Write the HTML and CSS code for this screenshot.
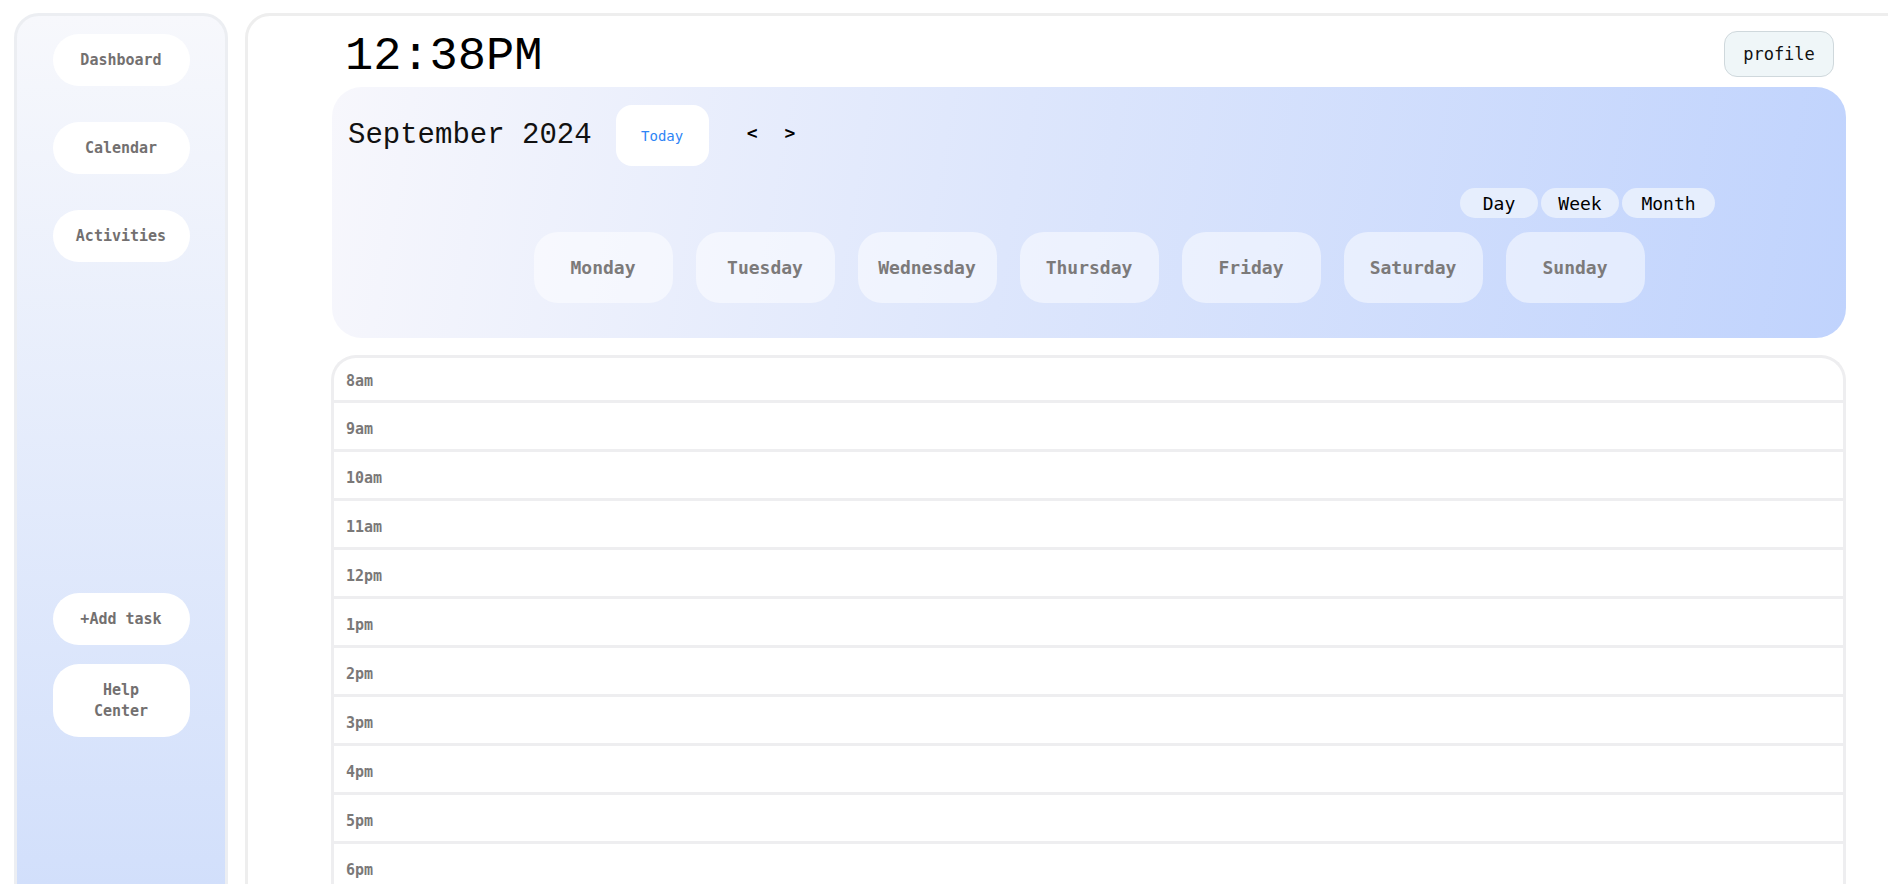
FILE: index.html
```html
<!DOCTYPE html>
<html lang="en">
<head>
<meta charset="utf-8">
<title>Calendar</title>
<link rel="stylesheet" href="styles.css">
</head>
<body>
<div class="app">
  <aside class="sidebar">
    <nav class="nav">
      <button class="side-btn">Dashboard</button>
      <button class="side-btn">Calendar</button>
      <button class="side-btn">Activities</button>
    </nav>
    <div class="side-bottom">
      <button class="side-btn">+Add task</button>
      <button class="side-btn help">Help<br>Center</button>
    </div>
  </aside>
  <main class="main">
    <div class="content">
      <div class="topbar">
        <div class="clock">12:38PM</div>
        <button class="profile">profile</button>
      </div>
      <section class="cal-header">
        <div class="month-row">
          <h1 class="month">September 2024</h1>
          <button class="today">Today</button>
          <div class="arrows">
            <button class="arrow">&lt;</button>
            <button class="arrow">&gt;</button>
          </div>
        </div>
        <div class="views">
          <button class="view">Day</button>
          <button class="view">Week</button>
          <button class="view">Month</button>
        </div>
        <div class="days">
          <div class="day">Monday</div>
          <div class="day">Tuesday</div>
          <div class="day">Wednesday</div>
          <div class="day">Thursday</div>
          <div class="day">Friday</div>
          <div class="day">Saturday</div>
          <div class="day">Sunday</div>
        </div>
      </section>
      <section class="grid">
        <div class="slot">8am</div>
        <div class="slot">9am</div>
        <div class="slot">10am</div>
        <div class="slot">11am</div>
        <div class="slot">12pm</div>
        <div class="slot">1pm</div>
        <div class="slot">2pm</div>
        <div class="slot">3pm</div>
        <div class="slot">4pm</div>
        <div class="slot">5pm</div>
        <div class="slot">6pm</div>
      </section>
    </div>
  </main>
</div>
</body>
</html>
```
FILE: styles.css
```css
* { box-sizing: border-box; }
html, body { margin: 0; padding: 0; overflow: hidden; background: #fff; }
body { font-family: "DejaVu Sans Mono", "Liberation Mono", monospace; }
button { font-family: inherit; border: none; cursor: pointer; }

.app {
  display: flex;
  gap: 17px;
  padding: 13px 0 0 14px;
  height: 884px;
}

.sidebar {
  flex: 0 0 214px;
  height: 920px;
  border: 3px solid #eceef2;
  border-radius: 25px;
  background: linear-gradient(180deg, #f7f8fc 0%, #d0defb 100%);
  display: flex;
  flex-direction: column;
  align-items: center;
  padding-top: 18px;
}
.nav { display: flex; flex-direction: column; gap: 36px; }
.side-bottom { display: flex; flex-direction: column; gap: 19px; margin-top: 331px; }
.side-btn {
  width: 137px;
  height: 52px;
  border-radius: 26px;
  background: #fff;
  color: #737070;
  font-size: 15px;
  font-weight: bold;
  line-height: 21px;
}
.side-btn.help { height: 73px; }

.main {
  flex: 0 0 1700px;
  height: 920px;
  border: 3px solid #eeeeee;
  border-radius: 25px;
  background: #fff;
  padding: 0 0 0 83px;
}
.content { width: 1515px; }

.topbar {
  display: flex;
  justify-content: space-between;
  align-items: flex-start;
  height: 71px;
  padding: 15px 12px 0 14px;
}
.clock {
  font-family: "Liberation Mono", monospace;
  font-size: 47px;
  line-height: 48px;
  color: #000;
  margin-top: 2px;
}
.profile {
  width: 110px;
  height: 46px;
  border: 1px solid #cfd8dc;
  border-radius: 13px;
  background: #eff6f8;
  color: #111;
  font-size: 17px;
}

.cal-header {
  width: 1514px;
  height: 251px;
  margin-left: 1px;
  border-radius: 30px;
  background: linear-gradient(100deg, #f7f7fc 0%, #dde6fc 45%, #c0d3fd 100%);
  padding: 18px 16px 0 16px;
}
.month-row { display: flex; align-items: center; height: 61px; }
.month {
  margin: 0;
  font-family: "Liberation Mono", monospace;
  font-weight: normal;
  font-size: 29px;
  color: #111;
}
.today {
  margin-left: 24px;
  width: 93px;
  height: 61px;
  border-radius: 16px;
  background: #fff;
  color: #2d85f6;
  font-size: 14px;
}
.arrows { display: flex; gap: 27px; margin-left: 38px; margin-top: -6px; }
.arrow {
  background: none;
  padding: 0;
  font-size: 18px;
  font-weight: bold;
  color: #000;
}

.views {
  display: flex;
  justify-content: flex-end;
  gap: 3px;
  margin-top: 22px;
  margin-right: 115px;
}
.view {
  height: 30px;
  border-radius: 15px;
  background: #e6eefd;
  color: #000;
  font-size: 18px;
  padding: 0;
}
.view:nth-child(1) { width: 78px; }
.view:nth-child(2) { width: 78px; }
.view:nth-child(3) { width: 93px; }

.days {
  display: flex;
  justify-content: center;
  gap: 23px;
  margin-top: 14px;
}
.day {
  width: 139px;
  height: 71px;
  border-radius: 24px;
  background: rgba(255, 255, 255, 0.5);
  display: flex;
  align-items: center;
  justify-content: center;
  color: #7c7a7a;
  font-size: 18px;
  font-weight: bold;
}

.grid {
  margin-top: 17px;
  width: 1515px;
  border: 3px solid #eeeef0;
  border-bottom: none;
  border-radius: 25px 25px 0 0;
  overflow: hidden;
}
.slot {
  height: 49px;
  border-bottom: 3px solid #eeeef0;
  padding: 6px 0 0 12px;
  display: flex;
  align-items: center;
  color: #7a7878;
  font-size: 15px;
  font-weight: bold;
}
.slot:first-child { height: 45px; padding-top: 4px; }
```
